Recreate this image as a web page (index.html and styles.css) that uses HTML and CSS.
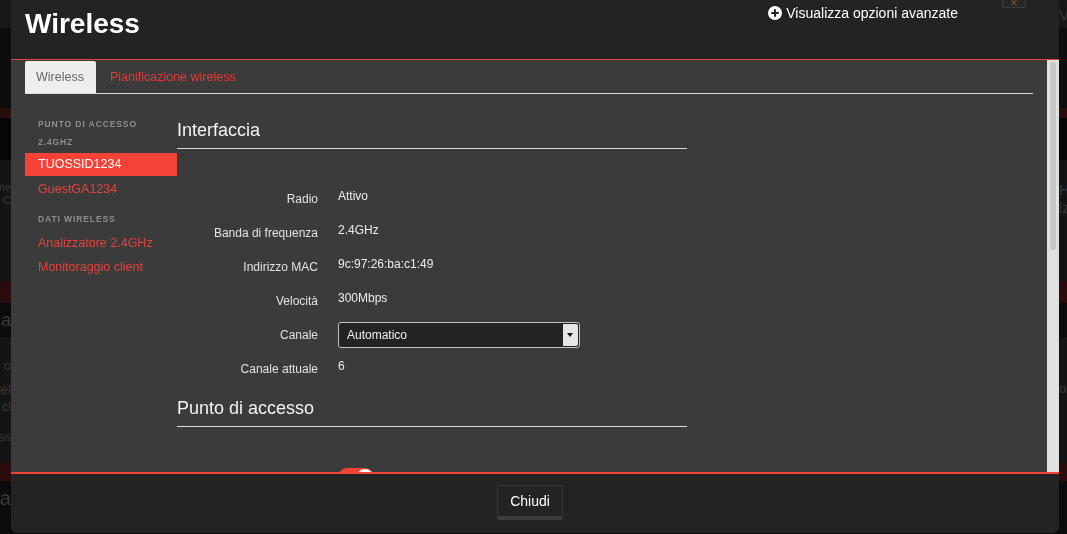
FILE: index.html
```html
<!DOCTYPE html>
<html>
<head>
	<title>Wireless</title>
	<link rel="stylesheet" href="styles.css">
</head>
<body>

	<!-- pagina sotto il modale -->
	<div class="page">
		<div class="band b_top"><div class="edge"></div><div class="fill"></div><div class="edge_r">Visualizzazione dis</div></div>
		<div class="band b_dark1"></div>
		<div class="band b_red"></div>
		<div class="band b_dark2"></div>
		<div class="band b_grey1">
			<div class="edge lines"><span>Dati di accesso al route me</span><span>Modifica nome e password o C</span></div>
			<div class="fill"></div>
			<div class="edge_r lines"><span>Hz</span><span>lz</span></div>
		</div>
		<div class="band b_red2"></div>
		<div class="band b_dark3"><div class="edge big">Wi-Fi e Banda Larga ca</div></div>
		<div class="band b_grey2">
			<div class="edge lines"><span>Ultimo accesso o</span><span>Stato connessione del</span><span>Lista dei dispositivi cl</span><span>Parola chiave e pass</span></div>
			<div class="fill"></div>
			<div class="edge_r lines"><span class="pad">on</span></div>
		</div>
		<div class="band b_red3"></div>
		<div class="band b_dark4"><div class="edge big">Telefonia</div></div>
	</div>

	<div class="modal">
		<div class="modal_head">
			<h1 class="modal_title">Wireless</h1>
			<a class="adv" href="#">
				<svg width="14" height="14" viewBox="0 0 14 14"><circle cx="7" cy="7" r="7" fill="#fff"/><path d="M7 3.2v7.6M3.2 7h7.6" stroke="#232323" stroke-width="2.2"/></svg>
				Visualizza opzioni avanzate
			</a>
			<div class="xbtn">×</div>
		</div>

		<div class="modal_body">
			<div class="scroll">
				<ul class="tabs">
					<li class="tab active">Wireless</li>
					<li class="tab">Pianificazione wireless</li>
				</ul>

				<div class="content">
					<div class="nav">
						<div class="nav_head">Punto di accesso 2.4GHz</div>
						<a class="nav_item sel" href="#">TUOSSID1234</a>
						<a class="nav_item" href="#">GuestGA1234</a>
						<div class="nav_head second">Dati wireless</div>
						<a class="nav_item first" href="#">Analizzatore 2.4GHz</a>
						<a class="nav_item" href="#">Monitoraggio client</a>
					</div>

					<div class="main">
						<h3 class="sect">Interfaccia</h3>
						<div class="row"><div class="lbl">Radio</div><div class="val">Attivo</div></div>
						<div class="row"><div class="lbl">Banda di frequenza</div><div class="val">2.4GHz</div></div>
						<div class="row"><div class="lbl">Indirizzo MAC</div><div class="val">9c:97:26:ba:c1:49</div></div>
						<div class="row"><div class="lbl">Velocità</div><div class="val">300Mbps</div></div>
						<div class="row"><div class="lbl">Canale</div>
							<div class="select"><span>Automatico</span><span class="caret"><i></i></span></div>
						</div>
						<div class="row"><div class="lbl">Canale attuale</div><div class="val">6</div></div>

						<h3 class="sect sect2">Punto di accesso</h3>
						<div class="row"><div class="lbl">Attivato</div><div class="toggle"><i></i></div></div>
						<div class="row"><div class="lbl">Nome rete (SSID)</div><div class="val">TUOSSID1234</div></div>
						<div class="row"><div class="lbl">Trasmissione SSID</div><div class="toggle"><i></i></div></div>
						<div class="row"><div class="lbl">Modalità sicurezza</div><div class="val">WPA2-PSK</div></div>
						<div class="row"><div class="lbl">Password</div><div class="val">••••••••••</div></div>
					</div>
				</div>
			</div>
			<div class="sbar"><div class="thumb"></div></div>
		</div>

		<div class="modal_foot">
			<button class="btn">Chiudi</button>
		</div>
	</div>

</body>
</html>
```

FILE: styles.css
```css
html, body {margin: 0; height: 100%; overflow: hidden;}
body {background: #0a0a0a; font-family: "Liberation Sans", Arial, sans-serif; color: #e6e6e6;}

/* pagina dietro */
.page {display: flex; flex-direction: column; height: 534px;}
.band {display: flex; flex: none; overflow: hidden; color: #383838; font-size: 13px;}
.band .fill {flex: 1;}
.edge {width: 11px; display: flex; justify-content: flex-end; white-space: nowrap; overflow: hidden;}
.edge_r {width: 8px; display: flex; justify-content: flex-start; white-space: nowrap; overflow: hidden;}
.lines {flex-direction: column; justify-content: flex-start; align-items: flex-end;}
.edge_r.lines {align-items: flex-start;}
.lines span {line-height: 17px;}
.big {font-size: 18px; align-items: center;}
.b_top {height: 28px; background: #171717;}
.b_top .edge_r {padding-top: 6px; font-size: 15px;}
.b_dark1 {height: 80px; background: #0d0d0d;}
.b_red {height: 10px; background: #2a0d0d;}
.b_dark2 {height: 42px; background: #060606;}
.b_grey1 {height: 122px; background: #131313;}
.b_grey1 .edge.lines {padding-top: 21px; font-size: 11px;}
.b_grey1 .edge.lines span {line-height: 13px;}
.b_grey1 .edge_r.lines {padding-top: 21px; font-size: 14px;}
.b_grey1 .edge_r.lines span {line-height: 18px;}
.b_red2 {height: 21px; background: #2a0c0c;}
.b_dark3 {height: 34px; background: #0b0b0b;}
.b_grey2 {height: 126px; background: #141414;}
.b_grey2 .edge.lines {padding-top: 20px;}
.b_grey2 .edge.lines span:nth-child(2) {margin-top: 7px;}
.b_grey2 .edge.lines span:nth-child(4) {margin-top: 13px;}
.b_grey2 .edge_r .pad {margin-top: 43px;}
.b_red3 {height: 18px; background: #2a0c0c;}
.b_dark4 {height: 53px; background: #0b0b0b;}
.b_dark4 .edge {font-size: 20px; align-items: flex-start; padding-top: 6px;}

/* modale */
.modal {position: fixed; left: 11px; top: 0; width: 1048px; height: 533px; display: flex; flex-direction: column;
		background: #232323; border-radius: 0 0 6px 6px; overflow: hidden;}
.modal_head {height: 59px; flex: none; display: flex; align-items: flex-start; border-bottom: 1px solid #d9473b;}
.modal_title {margin: 8px 0 0 14px; font-size: 28px; line-height: 32px; font-weight: bold; color: #fff;}
.adv {margin: 3px 0 0 auto; display: flex; align-items: center; gap: 4px; color: #fff; text-decoration: none;
		font-size: 14px; line-height: 20px;}
.adv svg {display: block;}
.xbtn {margin: -18px 33px 0 44px; width: 22px; height: 24px; border: 1px solid #3e3e3e; border-radius: 2px;
		background: #262626; color: #8a5a3a; font-size: 12px; text-align: center; line-height: 40px;}

.modal_body {flex: 1; background: #3b3b3b; display: flex; overflow: hidden;}
.scroll {flex: 1; overflow: hidden; padding: 1px 14px 0 14px;}
.sbar {width: 12px; flex: none; background: #e1e1e1; padding: 2px 3px 0 3px; box-sizing: border-box;}
.thumb {height: 188px; border-radius: 3px; background: #c6c6c6;}

.tabs {list-style: none; margin: 0; padding: 0; display: flex; border-bottom: 1px solid #dcdcdc;}
.tab {height: 32px; line-height: 32px; padding: 0 11px 0 11px; margin-right: 3px; font-size: 12.5px; color: #e53935;}
.tab.active {background: #eee; color: #666; border-radius: 2px 2px 0 0; padding: 0 12px 0 11px;}

.content {display: flex;}
.nav {width: 152px; flex: none; padding-top: 21px;}
.nav_head {padding: 0 13px; font-size: 8.5px; font-weight: bold; letter-spacing: 0.9px; line-height: 18px;
		text-transform: uppercase; color: #8e8e8e;}
.nav_head.second {margin-top: 9px;}
.nav_item {display: block; padding: 0 13px; height: 24px; line-height: 24px; font-size: 12.5px; color: #e8403a; text-decoration: none;}
.nav_item.sel {margin-top: 2px; background: #f44336; color: #fff; height: 23px; line-height: 23px;}
.nav_item.sel + .nav_item {margin-top: 1px;}
.nav_item.first {margin-top: 3px;}

.main {width: 510px;}
.sect {margin: 25px 0 33px 0; padding-bottom: 7px; font-size: 18px; line-height: 22px; font-weight: normal;
		color: #f2f2f2; border-bottom: 1px solid #dcdcdc;}
.sect2 {margin-top: 11px;}
.row {display: flex; height: 34px; font-size: 12px; line-height: 16px;}
.lbl {width: 141px; padding-top: 9px; margin-right: 20px; text-align: right; color: #e2e2e2;}
.val {padding-top: 6px; color: #ececec;}

.select {margin-top: 4px; width: 240px; height: 24px; border: 1px solid #c4c4c4; border-radius: 3px; background: #232323;
		display: flex; align-items: center; justify-content: space-between; color: #eee;}
.select span:first-child {padding-left: 8px;}
.caret {width: 15px; height: 22px; margin-right: 1px; background: #e6e6e6; border-radius: 0 2px 2px 0; position: relative;}
.caret i {position: absolute; left: 4px; top: 9px; border-left: 3.5px solid transparent; border-right: 3.5px solid transparent;
		border-top: 4px solid #111;}

.toggle {margin-top: 8px; width: 36px; height: 18px; border-radius: 9px; background: #f44336; position: relative;}
.toggle i {position: absolute; right: 1px; top: 1px; width: 16px; height: 16px; border-radius: 50%; background: #fff;}

.modal_foot {height: 59px; flex: none; border-top: 2px solid #f44336; display: flex; justify-content: center; padding-right: 10px;}
.btn {margin-top: 11px; height: 35px; padding: 0 12px; background: #232323; border: 1px solid #363636; border-bottom: 4px solid #3c3c3c;
		border-radius: 2px; color: #fff; font-family: "Liberation Sans", Arial, sans-serif; font-size: 14px;}
```
